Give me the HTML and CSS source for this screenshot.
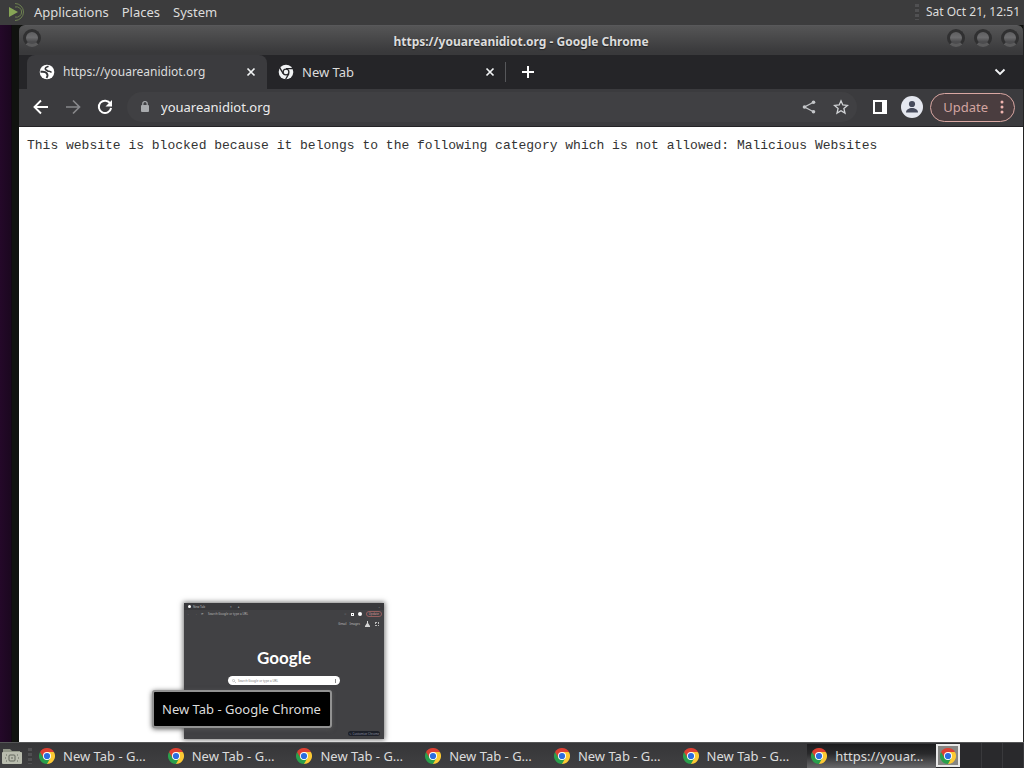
FILE: index.html
```
<!DOCTYPE html>
<html lang="en">
<head>
    <meta charset="UTF-8">
    <meta name="viewport" content="width=device-width, initial-scale=1.0">
    <title>https://youareanidiot.org - Google Chrome</title>
    <link rel="stylesheet" href="styles.css">
</head>
<body>
    <svg class="defs" aria-hidden="true">
        <symbol id="chrome" viewBox="0 0 16 16">
            <path d="M8 8 1.07 4A8 8 0 0 1 14.93 4z" fill="#dd4032"/>
            <path d="M8 8 14.93 4A8 8 0 0 1 8 16z" fill="#fcc934"/>
            <path d="M8 8 8 16A8 8 0 0 1 1.07 4z" fill="#2a9f4c"/>
            <path d="M8 4h6.93L11.4 10z" fill="#fcc934"/>
            <path d="M11.4 10 8 16 4.6 10z" fill="#2a9f4c"/>
            <path d="M4.6 10 1.07 4 8 4z" fill="#dd4032"/>
            <circle cx="8" cy="8" r="4" fill="#fff"/>
            <circle cx="8" cy="8" r="3.1" fill="#2b6de0"/>
        </symbol>
        <symbol id="close" viewBox="0 0 10 10">
            <path d="M1.5 1.5l7 7M8.5 1.5l-7 7" fill="none" stroke="#f1f3f4" stroke-width="1.7"/>
        </symbol>
    </svg>

    <header class="panel top-panel">
        <svg class="menu-logo" width="20" height="20" viewBox="0 0 20 20">
            <path d="M2 5l9 5-9 5z" fill="#87a556"/>
            <path d="M8 1.500A8.500 8.500 0 1 1 8 18.500M8 5A5.200 5.200 0 1 1 8 15" fill="none" stroke="#6d8050" stroke-width="1"/>
        </svg>
        <nav class="menus">
            <button>Applications</button>
            <button>Places</button>
            <button>System</button>
        </nav>
        <span class="grip"></span>
        <time class="clock">Sat Oct 21, 12:51</time>
    </header>

    <main class="desktop">
        <section class="window">
            <div class="titlebar">
                <button class="orb" aria-label="Window menu"></button>
                <h1>https://youareanidiot.org - Google Chrome</h1>
                <div class="orbs">
                    <button class="orb" aria-label="Minimize"></button>
                    <button class="orb" aria-label="Maximize"></button>
                    <button class="orb" aria-label="Close"></button>
                </div>
            </div>

            <div class="tabs">
                <div class="tab active">
                    <svg width="16" height="16" viewBox="0 0 16 16">
                        <circle cx="8" cy="8" r="7.300" fill="#fff"/>
                        <path d="M9.500 2.300C8 3 6.500 3 6.300 4.500S7.500 6 8.500 6.800 11 7 12.500 8.500" fill="none" stroke="#36373a" stroke-width="1.600"/>
                        <path d="M1.500 7.500C4 8 6 7.500 7.500 9S9 12 7.500 14" fill="none" stroke="#36373a" stroke-width="1.800"/>
                    </svg>
                    <span class="tab-title">https://youareanidiot.org</span>
                    <button aria-label="Close tab"><svg width="10" height="10"><use href="#close"/></svg></button>
                </div>
                <div class="tab">
                    <svg width="16" height="16" viewBox="0 0 16 16">
                        <circle cx="8" cy="8" r="7.300" fill="#f1f3f4"/>
                        <path d="M8 4.700h7M5.200 9.700 1.700 3.700M10.900 9.600 7.500 15.500" stroke="#252528" stroke-width="1.300"/>
                        <circle cx="8" cy="8" r="2.900" fill="#f1f3f4" stroke="#252528" stroke-width="1.300"/>
                    </svg>
                    <span class="tab-title">New Tab</span>
                    <button aria-label="Close tab"><svg width="10" height="10"><use href="#close"/></svg></button>
                </div>
                <button class="new-tab" aria-label="New tab">
                    <svg width="12" height="12" viewBox="0 0 12 12"><path d="M6 0v12M0 6h12" stroke="#fff" stroke-width="2"/></svg>
                </button>
                <button class="tab-search" aria-label="Search tabs">
                    <svg width="12" height="8" viewBox="0 0 12 8"><path d="M1.500 1.500 6 6l4.500-4.500" fill="none" stroke="#f1f3f4" stroke-width="1.900"/></svg>
                </button>
            </div>

            <div class="toolbar">
                <div class="nav">
                    <button aria-label="Back">
                        <svg width="16" height="16" viewBox="0 0 16 16"><path d="M15 8H2M8 1.500 1.500 8 8 14.500" fill="none" stroke="#fff" stroke-width="1.900"/></svg>
                    </button>
                    <button aria-label="Forward">
                        <svg width="16" height="16" viewBox="0 0 16 16"><path d="M1 8h13M8 1.500 14.500 8 8 14.500" fill="none" stroke="#87888b" stroke-width="1.700"/></svg>
                    </button>
                    <button aria-label="Reload">
                        <svg width="16" height="16" viewBox="0 0 16 16"><path d="M13.300 4.600A6.200 6.200 0 1 0 14.100 9" fill="none" stroke="#fff" stroke-width="2"/><path d="M15 1v6.500H8.500z" fill="#fff"/></svg>
                    </button>
                </div>
                <div class="omnibox">
                    <svg width="10" height="14" viewBox="0 0 10 14"><rect x="1" y="5" width="8" height="7" rx="1" fill="#a9abae"/><path d="M2.800 6V3.700a2.200 2.200 0 0 1 4.400 0V6" fill="none" stroke="#a9abae" stroke-width="1.200"/></svg>
                    <input type="text" aria-label="Address" value="youareanidiot.org">
                    <button aria-label="Share">
                        <svg width="14" height="14" viewBox="0 0 14 14"><path d="M11.500 2.200 2.500 7l9 4.800" fill="none" stroke="#c4c6c9" stroke-width="1.300"/><g fill="#c4c6c9"><circle cx="11.500" cy="2.200" r="1.800"/><circle cx="2.500" cy="7" r="1.800"/><circle cx="11.500" cy="11.800" r="1.800"/></g></svg>
                    </button>
                    <button aria-label="Bookmark">
                        <svg width="16" height="16" viewBox="0 0 16 16"><path d="M8 1.800 9.800 6l4.700.4-3.600 3.100 1.100 4.600L8 11.700l-4 2.400 1.100-4.600L1.500 6.400 6.200 6z" fill="none" stroke="#d2d4d7" stroke-width="1.300"/></svg>
                    </button>
                </div>
                <button class="side-panel" aria-label="Side panel">
                    <svg width="14" height="14" viewBox="0 0 14 14"><path d="M0 0h14v14H0zM2 2v10h7V2z" fill="#fff" fill-rule="evenodd"/></svg>
                </button>
                <button class="profile" aria-label="Profile">
                    <svg width="22" height="22" viewBox="0 0 22 22"><circle cx="11" cy="11" r="11" fill="#e4e7ef"/><circle cx="11" cy="8" r="3.100" fill="#474c5d"/><path d="M5 16.500c0-3 3-4.500 6-4.500s6 1.500 6 4.500z" fill="#474c5d"/></svg>
                </button>
                <button class="update">Update
                    <svg width="4" height="14" viewBox="0 0 4 14" fill="#f0b5b0"><circle cx="2" cy="2" r="1.500"/><circle cx="2" cy="7" r="1.500"/><circle cx="2" cy="12" r="1.500"/></svg>
                </button>
            </div>

            <article class="page">
                <p>This website is blocked because it belongs to the following category which is not allowed: Malicious Websites</p>
            </article>
        </section>
    </main>

    <!-- window preview and its tooltip float above the taskbar -->
    <div class="preview">
        <div class="mini-tabs"><i class="dot"></i><span>New Tab</span><span class="mini-x">×</span><span class="mini-plus">+</span><span class="mini-end">⌄</span></div>
        <div class="mini-bar">
            <span>←</span><span>→</span><span>⟳</span><span class="mini-url">Search Google or type a URL</span>
            <span>☆</span><i class="mini-side"></i><i class="dot"></i><span class="mini-update">Update</span>
        </div>
        <div class="mini-links"><span>Gmail</span><span>Images</span>
            <svg width="5" height="6" viewBox="0 0 5 6"><path d="M2 0h1v2l2 3v1H0V5l2-3z" fill="#d5d5d5"/></svg>
            <i class="mini-grid"></i>
        </div>
        <div class="mini-logo">Google</div>
        <div class="mini-search">
            <svg width="4" height="4" viewBox="0 0 4 4"><circle cx="1.500" cy="1.500" r="1.100" fill="none" stroke="#999" stroke-width=".5"/><path d="M2.300 2.300 4 4" stroke="#999" stroke-width=".5"/></svg>
            <span>Search Google or type a URL</span><i></i>
        </div>
        <div class="mini-custom">✎ Customize Chrome</div>
    </div>
    <div class="tooltip" role="tooltip">New Tab - Google Chrome</div>

    <footer class="panel taskbar">
        <button class="show-desktop" aria-label="Show desktop">
            <svg width="20" height="18" viewBox="0 0 20 18"><path d="M1 2h7l2 2h8v4H1z" fill="#94998a"/><rect x="0" y="5" width="20" height="12" rx="1" fill="#b9bcae"/><rect x="7" y="8" width="6" height="6" rx="1" fill="none" stroke="#62665c"/><path d="M4 8h1M3 11h1M4 14h1M15 8h1M16 11h1M15 14h1M9 11h2" stroke="#62665c"/></svg>
        </button>
        <span class="grip"></span>
        <div class="tasks">
            <button><svg width="16" height="16"><use href="#chrome"/></svg><span>New Tab - G…</span></button>
            <button><svg width="16" height="16"><use href="#chrome"/></svg><span>New Tab - G…</span></button>
            <button><svg width="16" height="16"><use href="#chrome"/></svg><span>New Tab - G…</span></button>
            <button><svg width="16" height="16"><use href="#chrome"/></svg><span>New Tab - G…</span></button>
            <button><svg width="16" height="16"><use href="#chrome"/></svg><span>New Tab - G…</span></button>
            <button><svg width="16" height="16"><use href="#chrome"/></svg><span>New Tab - G…</span></button>
            <button class="current"><svg width="16" height="16"><use href="#chrome"/></svg><span>https://youar…</span></button>
        </div>
        <div class="workspaces">
            <button class="current" aria-label="Workspace 1"><svg width="16" height="16"><use href="#chrome"/></svg></button>
            <button aria-label="Workspace 2"></button>
            <button aria-label="Workspace 3"></button>
            <button aria-label="Workspace 4"></button>
        </div>
    </footer>
</body>
</html>
```
FILE: styles.css
```
* {
    box-sizing: border-box;
}
body {
    display: flex;
    flex-direction: column;
    height: 100vh;
    margin: 0;
    overflow: hidden;
    font-family: "Noto Sans", sans-serif;
    font-size: 13px;
    line-height: 18px;
    color: #dcdcdc;
    background: #1c0920;
}
button {
    display: flex;
    align-items: center;
    justify-content: center;
    padding: 0;
    border: none;
    background: none;
    font: inherit;
    color: inherit;
}
svg {
    flex: none;
}
.defs {
    position: absolute;
    width: 0;
    height: 0;
}
.panel {
    display: flex;
    align-items: center;
    flex: none;
    background: #3c3c3d;
}
.top-panel {
    height: 25px;
    padding: 0 4px 2px 7px;
}
.menus {
    display: flex;
    gap: 13px;
    margin-left: 7px;
    flex: 1;
}
.grip {
    width: 4px;
    height: 16px;
    background: repeating-linear-gradient(#505052 0 3px, #3a3a3b 3px 5px);
}
.clock {
    margin-left: 7px;
    font-size: 12px;
}

.desktop {
    display: flex;
    flex: 1;
    min-height: 0;
    padding-left: 12px;
    background: linear-gradient(90deg, #240829, #1b071f 11px, #090a07 12px);
}
.window {
    display: flex;
    flex-direction: column;
    flex: 1;
    min-width: 0;
    border-left: 7px solid #10120f;
    border-right: 1px solid #222;
    background: #10120f;
}
.titlebar {
    display: flex;
    align-items: center;
    height: 30px;
    padding: 0 4px;
    border-top: 1px solid #58585a;
    border-radius: 6px 6px 0 0;
    background: linear-gradient(#555556, #4c4c4d 30%, #39393b 90%);
}
.titlebar h1 {
    flex: 1;
    margin: 2px 0 0 54px;
    font-size: 12px;
    line-height: 18px;
    font-weight: 700;
    text-align: center;
    text-shadow: 0 1px 1px #222;
}
.orbs {
    display: flex;
    gap: 9px;
}
.orb {
    width: 18px;
    height: 18px;
    margin-bottom: 5px;
    border: 3px solid #303031;
    border-bottom-color: #5b5b5c;
    border-radius: 50%;
    background: linear-gradient(#5e5e60, #6c6c6e 45%, #4c4c4e 80%);
}

.tabs {
    display: flex;
    align-items: center;
    height: 34px;
    padding-left: 8px;
    background: #252528;
}
.tab {
    display: flex;
    align-items: center;
    height: 20px;
    width: 239px;
    padding: 0 10px 0 11px;
    border-right: 1px solid #56575a;
}
.tab.active {
    height: 34px;
    width: 240px;
    padding: 0 11px 0 12px;
    border: none;
    border-radius: 8px 8px 0 0;
    background: #3b3b3e;
    font-size: 12px;
}
.tab-title {
    flex: 1;
    margin-left: 8px;
}
.new-tab {
    width: 28px;
    height: 28px;
    margin-left: 8px;
}
.tab-search {
    width: 28px;
    height: 28px;
    margin-left: auto;
    margin-right: 9px;
}

.toolbar {
    display: flex;
    align-items: center;
    height: 38px;
    padding: 0 8px 1px 14px;
    border-bottom: 1px solid #242326;
    background: #3b3b3e;
}
.nav {
    display: flex;
    gap: 16px;
}
.omnibox {
    display: flex;
    align-items: center;
    flex: 1;
    height: 30px;
    margin: 0 16px 0 14px;
    padding: 0 8px 0 13px;
    border-radius: 15px;
    background: #404043;
}
.omnibox input {
    flex: 1;
    min-width: 0;
    margin-left: 11px;
    padding: 0;
    border: none;
    outline: none;
    background: none;
    font: inherit;
    color: #ececed;
}
.omnibox button {
    width: 16px;
    margin-left: 16px;
}
.profile {
    margin: 0 7px 0 14px;
}
.update {
    gap: 12px;
    height: 29px;
    padding: 0 10px 0 12px;
    border: 1px solid #d9a7a2;
    border-radius: 15px;
    background: #4a3d3f;
    color: #d3a5a1;
}

.page {
    flex: 1;
    padding: 10px 8px;
    background: #fff;
    color: #333;
}
.page p {
    margin: 0;
    font-family: "Liberation Mono", monospace;
    font-size: 13px;
    line-height: 18px;
}

.preview {
    position: absolute;
    left: 184px;
    bottom: 29px;
    width: 200px;
    height: 136px;
    background: #414144;
    box-shadow: 0 0 5px 1px #777;
    font-size: 3px;
    line-height: 4px;
    color: #bbb;
}
.preview div {
    display: flex;
    align-items: center;
}
.dot {
    width: 3px;
    height: 3px;
    border-radius: 50%;
    background: #fff;
}
.preview .mini-tabs {
    height: 7px;
    padding: 0 3px 0 4px;
    gap: 2px;
    background: #38383b;
}
.mini-x {
    margin-left: 23px;
}
.mini-plus {
    margin-left: 4px;
    color: #fff;
}
.mini-end {
    margin-left: auto;
}
.preview .mini-bar {
    height: 8px;
    padding: 0 2px 0 3px;
    gap: 4px;
}
.mini-url {
    flex: 1;
}
.mini-side {
    width: 3px;
    height: 3px;
    border: 1px solid #fff;
}
.mini-bar .dot {
    width: 4px;
    height: 4px;
}
.mini-update {
    padding: 0 2px;
    border: 1px solid #965e5e;
    border-radius: 3px;
    color: #d99;
}
.preview .mini-links {
    justify-content: flex-end;
    gap: 3px;
    height: 12px;
    padding-right: 5px;
}
.mini-links svg {
    margin: 0 2px;
}
.mini-grid {
    width: 4px;
    height: 4px;
    border: 1px dotted #bbb;
}
.preview .mini-logo {
    justify-content: center;
    margin-top: 16px;
    font-family: Lato, sans-serif;
    font-size: 17px;
    line-height: 24px;
    font-weight: 700;
    color: #fff;
}
.preview .mini-search {
    width: 112px;
    height: 9px;
    margin: 6px auto 0;
    padding: 0 4px;
    gap: 2px;
    border-radius: 5px;
    background: #fff;
    color: #777;
}
.mini-search i {
    width: 1px;
    height: 4px;
    margin-left: auto;
    background: #888;
}
.preview .mini-custom {
    justify-content: center;
    position: absolute;
    right: 4px;
    bottom: 3px;
    width: 32px;
    height: 5px;
    border-radius: 3px;
    background: #1d2029;
    color: #8b91a0;
}
.tooltip {
    position: absolute;
    left: 152px;
    bottom: 40px;
    padding: 9px 9px 8px 8px;
    border: 2px solid #929292;
    border-radius: 3px;
    background: #000;
    box-shadow: 0 1px 5px #555;
    line-height: 17px;
}

.taskbar {
    height: 26px;
    padding-left: 2px;
    border-top: 1px solid #555657;
    background: linear-gradient(#363638, #404042);
}
.taskbar .grip {
    margin: 0 3px 0 6px;
}
.tasks {
    display: flex;
    flex: 1;
    min-width: 0;
}
.tasks button {
    flex: 1;
    min-width: 0;
    justify-content: flex-start;
    height: 24px;
    padding-left: 4px;
    gap: 8px;
    white-space: nowrap;
}
.tasks .current {
    background: linear-gradient(#1c1c1e, #29292b 40%, #69696b);
}
.workspaces {
    display: flex;
    flex: none;
    width: 88px;
    height: 25px;
    background: #29292c;
}
.workspaces button {
    flex: 1;
    border-right: 1px solid #39393c;
}
.workspaces .current {
    height: 23px;
    margin-top: 1px;
    border: 2px solid #e8e8e8;
    background: #858583;
}
```
